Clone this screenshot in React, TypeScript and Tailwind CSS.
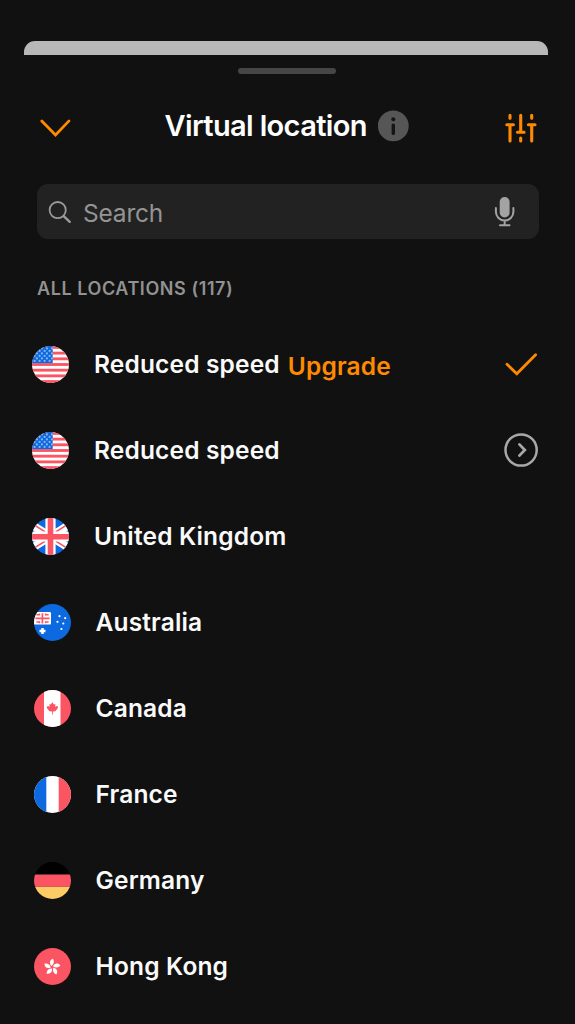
import { useState } from "react"

const Flag = ({ id, children }: { id: string; children: React.ReactNode }) => (
  <svg viewBox="0 0 37 37" className="h-[37px] w-[37px] shrink-0">
    <clipPath id={id}>
      <circle cx="18.5" cy="18.5" r="18.5" />
    </clipPath>
    <g clipPath={`url(#${id})`}>{children}</g>
  </svg>
)

const UsFlag = ({ id }: { id: string }) => (
  <Flag id={id}>
    <rect width="37" height="37" fill="#fff" />
    {[0, 1, 2, 3, 4, 5, 6].map((i) => (
      <rect key={i} y={i * 5.69} width="37" height="2.85" fill="#fb5463" />
    ))}
    <rect width="20.7" height="17.1" fill="#0c69df" />
    {[0, 1, 2, 3, 4, 5].map((row) =>
      [0, 1, 2, 3].map((col) => (
        <circle
          key={`${row}-${col}`}
          cx={2.6 + col * 5 + (row % 2 ? 0 : 2.3)}
          cy={2.4 + row * 2.5}
          r="1.1"
          fill="#86b5f0"
        />
      ))
    )}
  </Flag>
)

const UkFlag = () => (
  <Flag id="uk">
    <rect width="37" height="37" fill="#0c69df" />
    <path d="M-8 2 45 35M45 2-8 35" stroke="#fff" strokeWidth="8" />
    <path
      d="M-6 1.8 15 15M43 1.8 22 15M-6 35.2 15 22M43 35.2 22 22"
      stroke="#fb5463"
      strokeWidth="1.6"
    />
    <path d="M18.5 0V37M0 18.5H37" stroke="#fff" strokeWidth="10.2" />
    <path d="M18.5 0V37" stroke="#fb5463" strokeWidth="5.6" />
    <path d="M0 18.7H37" stroke="#fb5463" strokeWidth="5.6" />
  </Flag>
)

const AustraliaFlag = () => (
  <Flag id="au">
    <rect width="37" height="37" fill="#0c69df" />
    <rect x="-2" y="8" width="19" height="12.6" rx="1.2" fill="#fff" />
    <path d="M8.4 9.2V19.4M1.4 14.4H15.6" stroke="#fb5463" strokeWidth="1.7" />
    <path
      d="M2.4 10.8H5.4V9.6M14.6 10.8H11.6V9.6M2.4 18H5.4V19.2M14.6 18H11.6V19.2"
      stroke="#fb5463"
      strokeWidth="1.5"
      fill="none"
    />
    <path d="M8.5 24V30M5.5 27H11.5" stroke="#fff" strokeWidth="2.5" />
    <g fill="#fff">
      <circle cx="25.5" cy="12.2" r="1.1" />
      <circle cx="31.2" cy="14.2" r="1.1" />
      <circle cx="23.5" cy="17.8" r="1.1" />
      <circle cx="29.3" cy="19.5" r="1.1" />
      <circle cx="27.4" cy="25" r="1.1" />
    </g>
  </Flag>
)

const CanadaFlag = () => (
  <Flag id="ca">
    <rect width="37" height="37" fill="#fb5463" />
    <rect x="10" width="16.5" height="37" fill="#fff" />
    <path
      d="M18.4 12.2 20 14.4 21.4 13.9 21.2 17 22.5 15.9 24.2 16.7 23.6 18.5 21.3 21.2 18.8 21.5V24.6H18V21.5L15.5 21.2 13.2 18.5 12.6 16.7 14.3 15.9 15.6 17 15.4 13.9 16.8 14.4Z"
      fill="#fb5463"
    />
  </Flag>
)

const FranceFlag = () => (
  <Flag id="fr">
    <rect width="37" height="37" fill="#fff" />
    <rect width="12.3" height="37" fill="#0c69df" />
    <rect x="24.7" width="13" height="37" fill="#fb5463" />
  </Flag>
)

const GermanyFlag = () => (
  <Flag id="de">
    <rect width="37" height="37" fill="#000" />
    <rect y="12.5" width="37" height="12.3" fill="#fb5463" />
    <rect y="24.8" width="37" height="13" fill="#fecb67" />
  </Flag>
)

const HongKongFlag = () => (
  <Flag id="hk">
    <rect width="37" height="37" fill="#fb5463" />
    {[0, 72, 144, 216, 288].map((angle) => (
      <path
        key={angle}
        d="M17.4 18C14.8 15.2 15.6 12.2 19 10.8C20.6 13.4 20 16.4 17.4 18Z"
        transform={`rotate(${angle} 18.1 19.2)`}
        fill="#fff"
      />
    ))}
  </Flag>
)

const CheckIcon = () => (
  <svg
    viewBox="0 0 34 34"
    className="h-[34px] w-[34px]"
    fill="none"
    stroke="#ff8a00"
    strokeWidth="2.8"
    strokeLinecap="round"
  >
    <path d="M3 17.2 12.8 26.8 31.6 7.8" />
  </svg>
)

const ArrowIcon = () => (
  <svg
    viewBox="0 0 34 34"
    className="h-[34px] w-[34px]"
    fill="none"
    stroke="#a8a8a8"
    strokeLinecap="round"
  >
    <circle cx="17.1" cy="17" r="15.6" strokeWidth="2.5" />
    <path d="M15.4 11.4 20.8 17 15.4 22.6" strokeWidth="2.8" />
  </svg>
)

const locations = [
  { name: "Reduced speed", flag: <UsFlag id="us1" /> },
  { name: "Reduced speed", flag: <UsFlag id="us2" /> },
  { name: "United Kingdom", flag: <UkFlag /> },
  { name: "Australia", flag: <AustraliaFlag /> },
  { name: "Canada", flag: <CanadaFlag /> },
  { name: "France", flag: <FranceFlag /> },
  { name: "Germany", flag: <GermanyFlag /> },
  { name: "Hong Kong", flag: <HongKongFlag /> },
]

const App: React.FC = () => {
  const [search, setSearch] = useState("")

  return (
    <div className="flex h-[1024px] w-[575px] flex-col overflow-hidden bg-[#111111] pt-[41px] font-['Inter',sans-serif]">
      <div className="ml-[24px] h-[14px] w-[524px] shrink-0 rounded-t-[11px] bg-[#b8b8b8]" />
      <div className="mt-[13px] ml-[238px] h-[6px] w-[98px] shrink-0 rounded-full bg-[#464646]" />

      <header className="mt-[26px] flex h-[52px] shrink-0 items-center pr-[37px] pl-[39px]">
        <button className="mt-[4px]">
          <svg
            viewBox="0 0 32 20"
            className="h-[20px] w-[32px]"
            fill="none"
            stroke="#ff8a00"
            strokeWidth="2.8"
            strokeLinecap="round"
          >
            <path d="M2.8 2.9 16.5 16.9 30 2.9" />
          </svg>
        </button>
        <h1 className="ml-[93.5px] w-[213.5px] text-[29px] font-semibold tracking-[-0.64px] whitespace-nowrap text-white">
          Virtual location
        </h1>
        <svg viewBox="0 0 32 32" className="h-[32px] w-[32px] shrink-0">
          <circle cx="15.3" cy="15.9" r="15.4" fill="#565656" />
          <circle cx="15.3" cy="9.2" r="2" fill="#151515" />
          <path
            d="M15.3 15.2V23.4"
            stroke="#151515"
            strokeWidth="3.4"
            strokeLinecap="round"
          />
        </svg>
        <button className="mt-[4px] ml-auto">
          <svg
            viewBox="0 0 34 32"
            className="h-[32px] w-[34px]"
            fill="none"
            stroke="#ff8a00"
            strokeWidth="3.1"
            strokeLinecap="round"
          >
            <path d="M6 3.4V6.3M2.8 12.7H9.4M6 12.7V29" />
            <path d="M16.7 3.4V20.2M13.5 20.2H20.1M16.7 26V29" />
            <path d="M27.7 3.4V6.3M24.4 12.7H31M27.7 12.7V29" />
          </svg>
        </button>
      </header>

      <div className="mx-[37px] mt-[32px] flex h-[55px] w-[502px] shrink-0 items-center rounded-[11px] bg-[#222222] pr-[22px] pl-[11px]">
        <svg
          viewBox="0 0 24 24"
          className="h-[24px] w-[24px] shrink-0"
          fill="none"
          stroke="#9a9a9a"
          strokeLinecap="round"
        >
          <circle cx="9.7" cy="10.1" r="8.1" strokeWidth="1.8" />
          <path d="M15.7 16.1 21.7 21.8" strokeWidth="2.4" />
        </svg>
        <input
          type="text"
          value={search}
          onChange={(e) => setSearch(e.target.value)}
          placeholder="Search"
          className="ml-[11px] h-[40px] min-w-0 flex-1 pt-[2px] text-[24.5px] tracking-[-0.2px] text-white outline-none placeholder:text-[#949494]"
        />
        <svg viewBox="0 0 24 32" className="h-[32px] w-[24px] shrink-0">
          <rect x="6.7" y="1.1" width="9.9" height="20.4" rx="4.9" fill="#a3a3a3" />
          <path
            d="M2.9 12V15.8A8.75 8.75 0 0 0 20.4 15.8V12M11.65 24.6V29M7 29.3H16.5"
            fill="none"
            stroke="#a3a3a3"
            strokeWidth="2"
            strokeLinecap="round"
          />
        </svg>
      </div>

      <h2 className="mt-[38px] ml-[37px] h-[24px] shrink-0 text-[18px] leading-[24px] font-semibold tracking-[0.57px] whitespace-nowrap text-[#929292]">
        ALL LOCATIONS (117)
      </h2>

      <ul className="mt-[20px]">
        {locations.map((location, index) => (
          <li
            key={index}
            className={`flex h-[86px] items-center pr-[37px] ${
              index < 3 ? "pl-[32px]" : "pl-[33.5px]"
            }`}
          >
            {location.flag}
            <span className="ml-[25px] pt-[1px] text-[24.5px] font-[560] tracking-[0.16px] whitespace-nowrap text-[#fafafa]">
              {location.name}
            </span>
            {index === 0 && (
              <a className="ml-[8px] pt-[5px] text-[24.5px] font-[560] tracking-[0.16px] text-[#ff8a00]">
                Upgrade
              </a>
            )}
            {index < 2 && (
              <button className="ml-auto">
                {index === 0 ? <CheckIcon /> : <ArrowIcon />}
              </button>
            )}
          </li>
        ))}
      </ul>
    </div>
  )
}

export default App
